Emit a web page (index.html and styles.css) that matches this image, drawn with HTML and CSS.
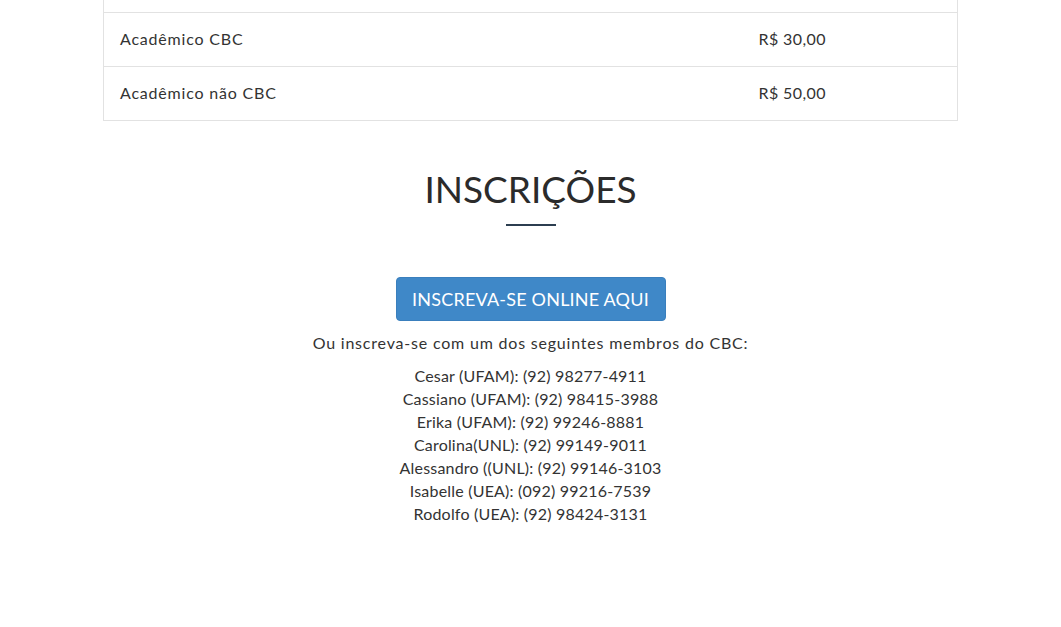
FILE: index.html
```html
<!DOCTYPE html>
<html lang="pt-BR">
<head>
  <meta charset="UTF-8" />
  <meta name="viewport" content="width=device-width, initial-scale=1.0" />
  <title>Inscrições</title>
  <link rel="stylesheet" href="styles.css">
</head>
<body>

  <section class="precos">
    <table class="tabela">
      <colgroup>
        <col class="col-categoria">
        <col>
      </colgroup>
      <tr class="corte">
        <td></td>
        <td></td>
      </tr>
      <tr>
        <td class="categoria">Acadêmico CBC</td>
        <td>R$ 30,00</td>
      </tr>
      <tr>
        <td class="categoria">Acadêmico não CBC</td>
        <td>R$ 50,00</td>
      </tr>
    </table>
  </section>

  <section class="inscricoes">
    <h2>INSCRIÇÕES</h2>
    <hr class="traco">
    <a href="#" class="btn">INSCREVA-SE ONLINE AQUI</a>
    <p class="aviso">Ou inscreva-se com um dos seguintes membros do CBC:</p>
    <ul class="contatos">
      <li>Cesar (UFAM): (92) 98277-4911</li>
      <li>Cassiano (UFAM): (92) 98415-3988</li>
      <li>Erika (UFAM): (92) 99246-8881</li>
      <li>Carolina(UNL): (92) 99149-9011</li>
      <li>Alessandro ((UNL): (92) 99146-3103</li>
      <li>Isabelle (UEA): (092) 99216-7539</li>
      <li>Rodolfo (UEA): (92) 98424-3131</li>
    </ul>
  </section>

</body>
</html>
```

FILE: styles.css
```css
* {
  margin: 0;
  padding: 0;
  box-sizing: border-box;
}
body {
  font-family: 'Lato', 'Open Sans', sans-serif;
  color: #333;
  background: #fff;
  font-size: 16px;
  letter-spacing: 0.4px;
}
.precos {
  width: 855px;
  margin: 0 auto;
}
.tabela {
  width: 100%;
  table-layout: fixed;
  border-collapse: collapse;
  border-left: 1px solid #e2e2e2;
  border-right: 1px solid #e2e2e2;
  border-bottom: 1px solid #e2e2e2;
}
.col-categoria {
  width: 639px;
}
.tabela td {
  height: 54px;
  padding: 0 16px 1px;
  border-top: 1px solid #e2e2e2;
  vertical-align: middle;
}
.tabela .categoria {
  letter-spacing: 0.8px;
}
.tabela .corte td {
  height: 12px;
  padding: 0;
  border-top: none;
}
.inscricoes {
  text-align: center;
  padding-top: 47px;
}
.inscricoes h2 {
  font-size: 37px;
  font-weight: 400;
  line-height: 42px;
  color: #2b2b2b;
  letter-spacing: 0;
}
.traco {
  width: 50px;
  height: 2px;
  border: none;
  background: #2c3e50;
  margin: 14px auto 51px;
}
.btn {
  display: inline-block;
  width: 270px;
  height: 44px;
  line-height: 43px;
  background: #3f88c8;
  border: 1px solid #3a7fbd;
  color: #fff;
  border-radius: 4px;
  font-size: 18px;
  text-decoration: none;
  letter-spacing: 0.2px;
  vertical-align: top;
}
.aviso {
  margin-top: 10px;
  line-height: 23px;
  letter-spacing: 0.8px;
}
.contatos {
  list-style: none;
  margin-top: 10px;
  line-height: 23px;
  letter-spacing: 0.2px;
}
```
